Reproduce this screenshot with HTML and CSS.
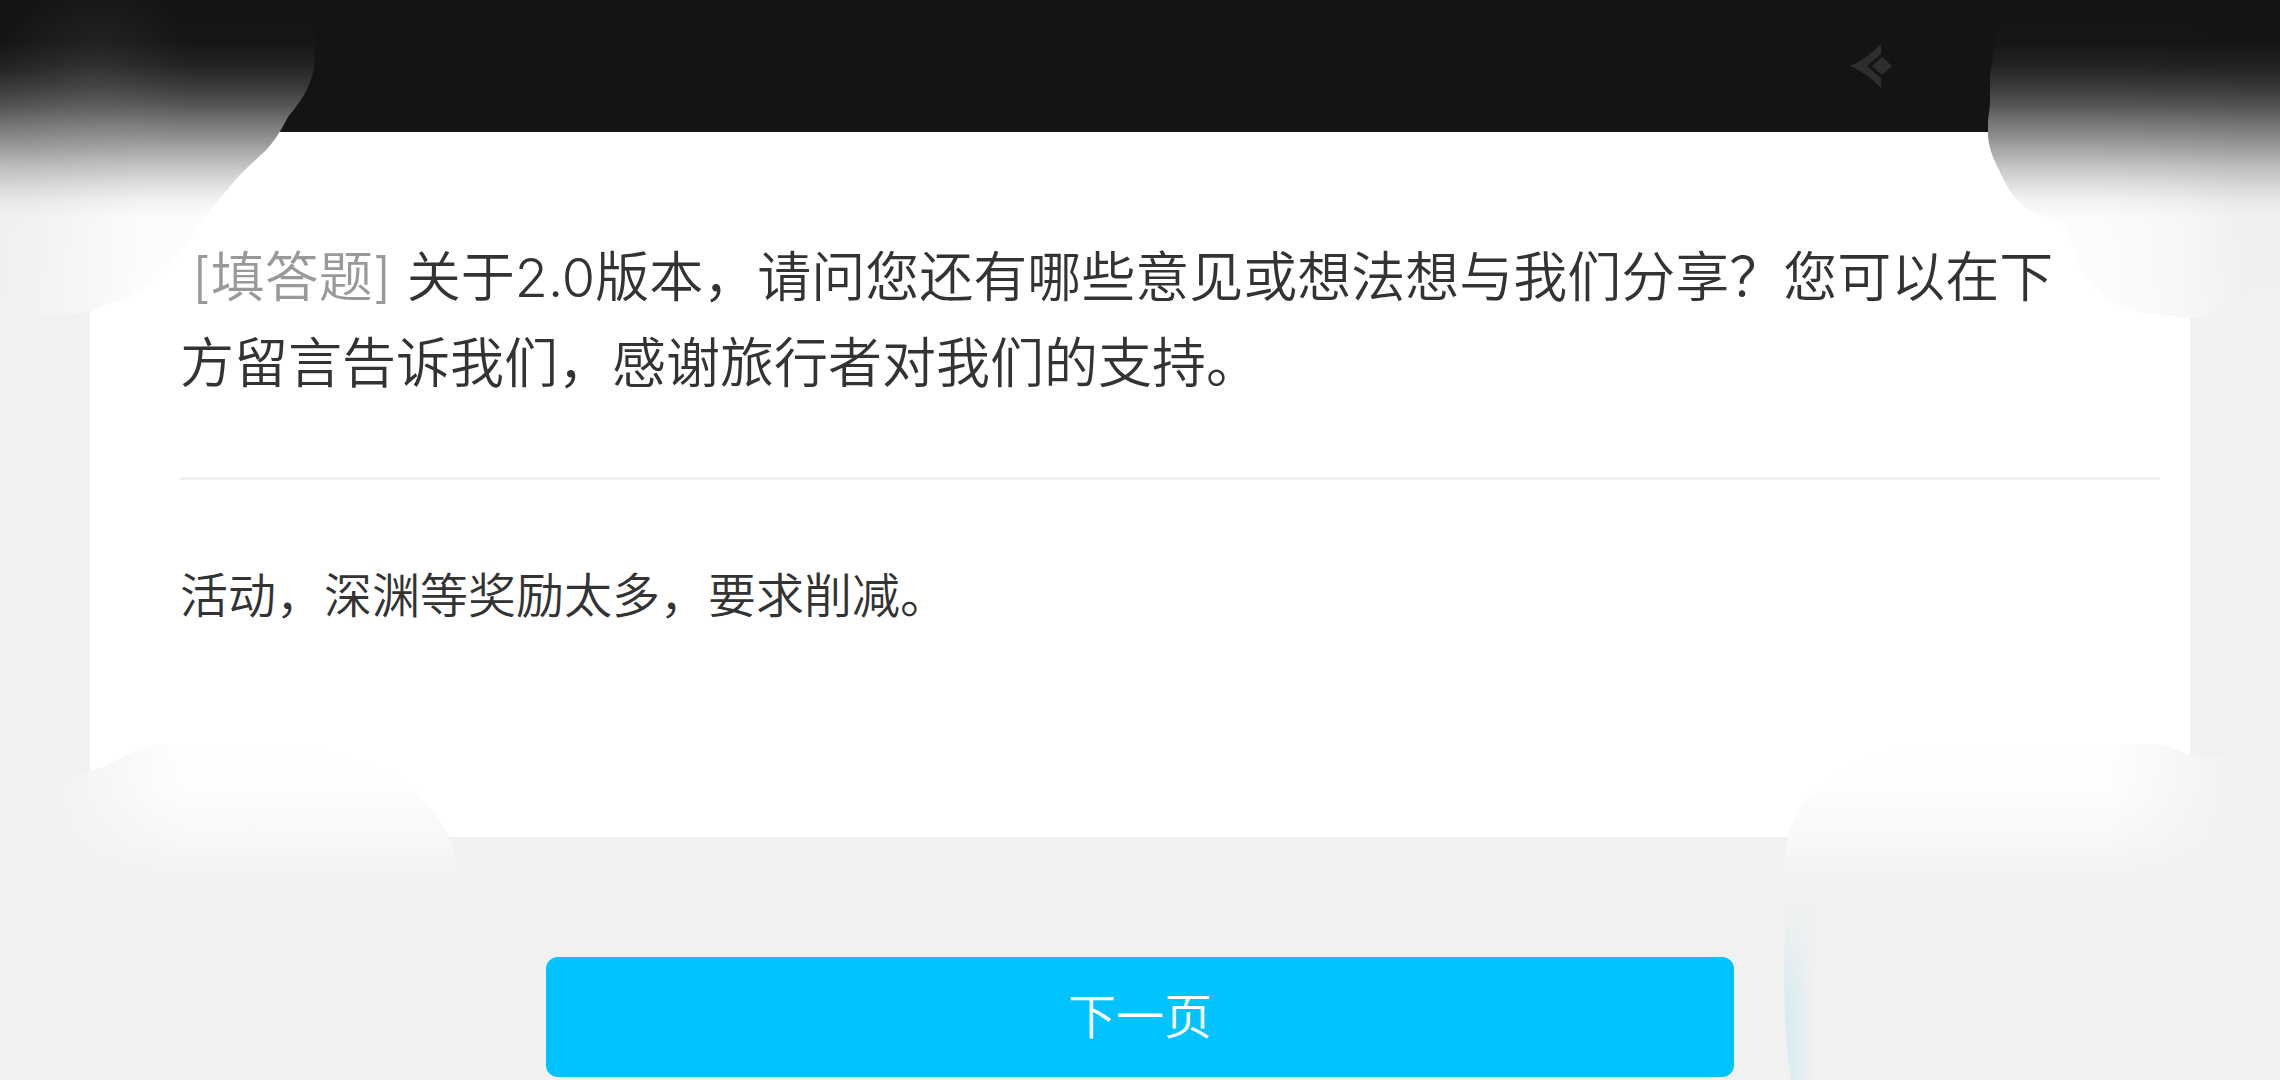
FILE: index.html
```html
<!DOCTYPE html>
<html lang="zh-CN">
<head>
<meta charset="utf-8">
<meta name="viewport" content="width=device-width, initial-scale=1">
<title>2.0版本问卷</title>
<link rel="stylesheet" href="styles.css">
</head>
<body>
<header class="topbar">
  <svg class="topbar-logo" viewBox="0 0 42 44" aria-hidden="true">
    <path d="M0 22 Q18 14 31 0 V10 L17 22 L31 34 V44 Q18 30 0 22Z M32 13 L42 22 L32 31 L22 22Z"/>
  </svg>
</header>
<main class="page">
  <form class="survey">
    <section class="card">
      <label class="question" for="answer"><span class="tag">[填答题]</span> <span>关于2.0版本，请问您还有哪些意见或想法想与我们分享？您可以在下方留言告诉我们，感谢旅行者对我们的支持。</span></label>
      <textarea class="answer" id="answer">活动，深渊等奖励太多，要求削减。</textarea>
    </section>
    <button class="next" type="button">下一页</button>
  </form>
</main>

<svg class="smudge smudge-tl" viewBox="0 0 330 330" aria-hidden="true">
  <defs>
    <linearGradient id="fade" gradientUnits="userSpaceOnUse" x1="0" y1="0" x2="0" y2="330">
      <stop offset="0" stop-color="#131416"/>
      <stop offset=".13" stop-color="#151618"/>
      <stop offset=".2" stop-color="#222324"/>
      <stop offset=".26" stop-color="#38393a"/>
      <stop offset=".32" stop-color="#555656"/>
      <stop offset=".38" stop-color="#7a7b7b"/>
      <stop offset=".44" stop-color="#9d9e9e"/>
      <stop offset=".5" stop-color="#c2c2c2"/>
      <stop offset=".56" stop-color="#e0e0e0"/>
      <stop offset=".61" stop-color="#f3f3f3"/>
      <stop offset=".66" stop-color="#fcfcfc"/>
      <stop offset="1" stop-color="#fdfdfd"/>
    </linearGradient>
    <linearGradient id="shade-left" gradientUnits="userSpaceOnUse" x1="0" y1="0" x2="150" y2="0">
      <stop offset="0" stop-color="#000" stop-opacity=".047"/>
      <stop offset=".2" stop-color="#000" stop-opacity=".043"/>
      <stop offset="1" stop-color="#000" stop-opacity="0"/>
    </linearGradient>
    <radialGradient id="glow" gradientUnits="userSpaceOnUse" cx="95" cy="75" r="100">
      <stop offset="0" stop-color="#fff" stop-opacity=".07"/>
      <stop offset="1" stop-color="#fff" stop-opacity="0"/>
    </radialGradient>
    <path id="shape-tl" d="M0 0H315V55C315 80 304 98 288 117C282 128 275 142 262 154C248 167 240 174 232 184L202 220C194 234 188 244 174 260C152 284 134 297 118 301L90 311C62 316 30 319 0 322Z"/>
  </defs>
  <use href="#shape-tl" fill="url(#fade)"/>
  <use href="#shape-tl" fill="url(#shade-left)"/>
  <use href="#shape-tl" fill="url(#glow)"/>
</svg>

<svg class="smudge smudge-tr" viewBox="0 0 300 330" aria-hidden="true">
  <defs>
    <linearGradient id="shade-right" gradientUnits="userSpaceOnUse" x1="110" y1="0" x2="260" y2="0">
      <stop offset="0" stop-color="#000" stop-opacity="0"/>
      <stop offset=".6" stop-color="#000" stop-opacity=".02"/>
      <stop offset="1" stop-color="#000" stop-opacity=".047"/>
    </linearGradient>
    <path id="shape-tr" d="M15 0H300V286H271C260 298 248 308 235 312C222 318 212 318 200 317C180 314 160 314 146 308C118 298 102 276 96 258C91 245 92 234 84 225C78 218 68 219 58 214C38 206 28 190 19 170C12 156 8 146 8 132V120L10 105V75C11 65 15 50 15 40Z"/>
  </defs>
  <use href="#shape-tr" fill="url(#fade)"/>
  <use href="#shape-tr" fill="url(#shade-right)"/>
</svg>

<svg class="smudge smudge-bl" viewBox="0 740 460 170" aria-hidden="true">
  <defs>
    <linearGradient id="haze" gradientUnits="userSpaceOnUse" x1="0" y1="744" x2="0" y2="900">
      <stop offset="0" stop-color="#fefefe"/>
      <stop offset=".3" stop-color="#fdfdfd"/>
      <stop offset=".6" stop-color="#f8f8f8"/>
      <stop offset=".82" stop-color="#f3f3f3"/>
      <stop offset="1" stop-color="#f1f1f1"/>
    </linearGradient>
    <linearGradient id="blend-left" gradientUnits="userSpaceOnUse" x1="40" y1="0" x2="180" y2="0">
      <stop offset="0" stop-color="#f1f1f1"/>
      <stop offset="1" stop-color="#f1f1f1" stop-opacity="0"/>
    </linearGradient>
    <path id="shape-bl" d="M50 910V812C56 790 74 776 90 771C120 764 134 744 170 744H280C330 750 350 762 385 772C408 780 420 794 430 807C450 833 458 855 458 880V910Z"/>
  </defs>
  <use href="#shape-bl" fill="url(#haze)"/>
  <use href="#shape-bl" fill="url(#blend-left)"/>
</svg>

<svg class="smudge smudge-br" viewBox="1780 740 500 340" aria-hidden="true">
  <defs>
    <linearGradient id="blend-right" gradientUnits="userSpaceOnUse" x1="2110" y1="0" x2="2240" y2="0">
      <stop offset="0" stop-color="#f1f1f1" stop-opacity="0"/>
      <stop offset="1" stop-color="#f1f1f1"/>
    </linearGradient>
    <linearGradient id="tint" gradientUnits="userSpaceOnUse" x1="1784" y1="0" x2="1816" y2="0">
      <stop offset="0" stop-color="#d8ebf1"/>
      <stop offset=".4" stop-color="#e0edf0"/>
      <stop offset="1" stop-color="#f1f1f1"/>
    </linearGradient>
    <linearGradient id="tint-top" gradientUnits="userSpaceOnUse" x1="0" y1="900" x2="0" y2="1000">
      <stop offset="0" stop-color="#f1f1f1"/>
      <stop offset="1" stop-color="#f1f1f1" stop-opacity="0"/>
    </linearGradient>
    <path id="shape-br" d="M1784 910V870C1784 850 1788 832 1796 815C1810 786 1840 775 1854 768C1880 750 1920 744 1970 744H2150C2170 745 2182 752 2190 756H2250L2280 764V910Z"/>
    <path id="shape-tint" d="M1788 900C1783 950 1782 1020 1791 1080H1820V900Z"/>
  </defs>
  <use href="#shape-br" fill="url(#haze)"/>
  <use href="#shape-br" fill="url(#blend-right)"/>
  <use href="#shape-tint" fill="url(#tint)"/>
  <use href="#shape-tint" fill="url(#tint-top)"/>
</svg>
</body>
</html>
```
FILE: styles.css
```css
* {
  box-sizing: border-box;
}

body {
  position: relative;
  margin: 0;
  min-height: 100vh;
  background: #f1f1f1;
  color: #333;
  font-family: Inter, "Noto Sans CJK SC", sans-serif;
  font-weight: 350;
}

.topbar {
  display: flex;
  align-items: center;
  justify-content: flex-end;
  height: 132px;
  padding-right: 17%;
  background: #131416;
}

.topbar-logo {
  width: 42px;
  height: 44px;
  fill: #2d2e30;
}

.page {
  padding: 0 90px;
}

.survey {
  display: flex;
  flex-direction: column;
  align-items: center;
  gap: 120px;
}

.card {
  display: flex;
  flex-direction: column;
  width: 100%;
  padding: 103px 30px 0 90px;
  background: #fff;
}

.question {
  padding: 0 60px 70px 0;
  border-bottom: 3px solid #f1f1f1;
  font-size: 54px;
  line-height: 86px;
}

.tag {
  margin-left: 12px;
  color: #999;
}

.answer {
  height: 357px;
  padding: 80px 0 0;
  border: 0;
  outline: 0;
  resize: none;
  background: transparent;
  color: inherit;
  font: inherit;
  font-size: 48px;
  line-height: 72px;
}

.next {
  width: 100%;
  max-width: 1188px;
  height: 120px;
  padding: 0 0 8px;
  border: 0;
  border-radius: 12px;
  background: #00c3ff;
  color: #fff;
  font: inherit;
  font-size: 48px;
}

/* Soft patches lying over the four corners */
.smudge {
  position: absolute;
  pointer-events: none;
}

.smudge-tl {
  top: 0;
  left: 0;
  width: 330px;
}

.smudge-tr {
  top: 0;
  right: 0;
  width: 300px;
}

.smudge-bl {
  top: 740px;
  left: 0;
  width: 460px;
}

.smudge-br {
  top: 740px;
  right: 0;
  width: 500px;
}
```
